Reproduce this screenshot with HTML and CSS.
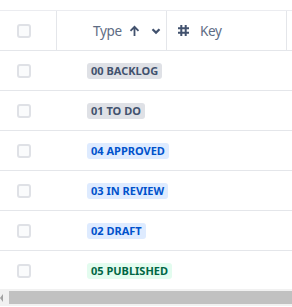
FILE: index.html
```html
<!DOCTYPE html>
<html lang="en">
<head>
    <meta charset="UTF-8">
    <meta name="viewport" content="width=device-width, initial-scale=1.0">
    <title>Issues</title>
    <link rel="stylesheet" href="styles.css">
</head>
<body>
    <div class="table">
        <div class="row header">
            <div class="cell check"><span class="box"></span></div>
            <div class="cell type-head">
                <span class="label">Type</span>
                <svg class="arrow" width="11" height="12" viewBox="0 0 11 12"><path d="M5.5 11V2M1.5 5.8l4-4 4 4" fill="none" stroke="#42526e" stroke-width="1.8"/></svg>
                <svg class="chev" width="10" height="8" viewBox="0 0 10 8"><path d="M1.5 2.2L5 5.6l3.5-3.4" fill="none" stroke="#42526e" stroke-width="2.2"/></svg>
            </div>
            <div class="cell key-head">
                <svg class="hash" width="13" height="13" viewBox="0 0 13 13"><path d="M4.3 1v11M8.7 1v11M1 4.3h11M1 8.7h11" fill="none" stroke="#42526e" stroke-width="2"/></svg>
                <span class="label">Key</span>
            </div>
            <div class="cell rest"></div>
        </div>
        <div class="row">
            <div class="cell check"><span class="box"></span></div>
            <div class="cell type"><span class="badge gray">00 BACKLOG</span></div>
            <div class="cell key"></div>
            <div class="cell rest"></div>
        </div>
        <div class="row">
            <div class="cell check"><span class="box"></span></div>
            <div class="cell type"><span class="badge gray">01 TO DO</span></div>
            <div class="cell key"></div>
            <div class="cell rest"></div>
        </div>
        <div class="row">
            <div class="cell check"><span class="box"></span></div>
            <div class="cell type"><span class="badge blue">04 APPROVED</span></div>
            <div class="cell key"></div>
            <div class="cell rest"></div>
        </div>
        <div class="row">
            <div class="cell check"><span class="box"></span></div>
            <div class="cell type"><span class="badge blue">03 IN REVIEW</span></div>
            <div class="cell key"></div>
            <div class="cell rest"></div>
        </div>
        <div class="row">
            <div class="cell check"><span class="box"></span></div>
            <div class="cell type"><span class="badge blue">02 DRAFT</span></div>
            <div class="cell key"></div>
            <div class="cell rest"></div>
        </div>
        <div class="row last">
            <div class="cell check"><span class="box"></span></div>
            <div class="cell type"><span class="badge green">05 PUBLISHED</span></div>
            <div class="cell key"></div>
            <div class="cell rest"></div>
        </div>
    </div>
    <div class="scrollbar">
        <span class="scroll-arrow"></span>
        <div class="thumb"></div>
    </div>
</body>
</html>
```

FILE: styles.css
```css
body {
    margin: 0;
    padding: 10px 0 0;
    font-family: "Segoe UI", "Noto Sans", "Open Sans", sans-serif;
    background-color: white;
    overflow: hidden;
    height: 307px;
    box-sizing: border-box;
}
.table {
    border-top: 1px solid #ebecf0;
}
.row {
    display: flex;
    height: 40px;
    border-bottom: 1px solid #e4e6ea;
    box-sizing: border-box;
}
.row.last {
    border-bottom: none;
}
.cell {
    display: flex;
    align-items: center;
    box-sizing: border-box;
}
.check {
    width: 57px;
    padding-left: 17px;
}
.type {
    width: 110px;
    padding-left: 30px;
}
.key {
    width: 120px;
}
.rest {
    flex: 1;
}
.header .cell {
    border-right: 1px solid #e4e6ea;
}
.header .rest {
    border-right: none;
}
.box {
    display: block;
    width: 14px;
    height: 14px;
    border: 2px solid #dfe1e6;
    border-radius: 3px;
    background-color: #fafbfc;
    box-sizing: border-box;
}
.label {
    font-size: 13.5px;
    letter-spacing: -0.3px;
    color: #5e6c84;
}
.type-head {
    width: 110px;
    padding-left: 36px;
}
.type-head .arrow {
    margin-left: 7px;
}
.type-head .chev {
    margin-left: 11px;
}
.key-head {
    width: 120px;
    padding-left: 10px;
}
.key-head .hash {
    margin-right: 10px;
}
.badge {
    display: inline-block;
    font-size: 11px;
    font-weight: 700;
    line-height: 16px;
    padding: 0 4px;
    border-radius: 3px;
    white-space: nowrap;
}
.gray {
    background-color: #dfe1e6;
    color: #42526e;
}
.blue {
    background-color: #deebff;
    color: #0052cc;
}
.green {
    background-color: #e3fcef;
    color: #006644;
}
.scrollbar {
    display: flex;
    align-items: center;
    height: 17px;
    margin-top: -2px;
    background-color: #f1f1f1;
}
.scroll-arrow {
    width: 0;
    height: 0;
    border-top: 4px solid transparent;
    border-bottom: 4px solid transparent;
    border-right: 3px solid #a3a3a3;
    margin-right: 6px;
}
.thumb {
    flex: 1;
    height: 13px;
    background-color: #c1c1c1;
}
```
